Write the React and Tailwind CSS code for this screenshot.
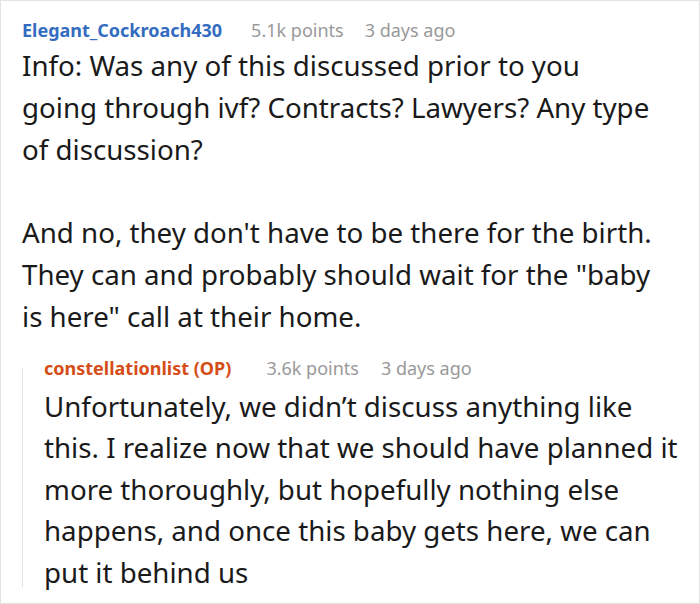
const Meta = ({ name, nameColor, points, age, gapA, gapB }) => (
  <div className="flex items-baseline whitespace-nowrap text-[18px] leading-[24px]">
    <span className={`font-bold ${nameColor}`}>{name}</span>
    <span className={`${gapA} text-[#999999]`}>{points}</span>
    <span className={`${gapB} text-[#999999]`}>{age}</span>
  </div>
);

const App = () => {
  return (
    <div
      className="w-[700px] h-[604px] overflow-hidden border border-[#e3e3e3] bg-white text-[#1a1a1a]"
      style={{ fontFamily: '"Noto Sans", "Open Sans", sans-serif' }}
    >
      <div className="pl-[21px] pt-[17px]">
        <Meta
          name="Elegant_Cockroach430"
          nameColor="text-[#336cc0]"
          points="5.1k points"
          age="3 days ago"
          gapA="ml-[29px]"
          gapB="ml-[21px]"
        />

        <div className="mt-[2px] whitespace-nowrap text-[27.7px] leading-[42px]">
          <p>
            Info: Was any of this discussed prior to you
            <br />
            going through ivf? Contracts? Lawyers? Any type
            <br />
            of discussion?
          </p>
          <p className="mt-[41px]">
            And no, they don't have to be there for the birth.
            <br />
            They can and probably should wait for the "baby
            <br />
            is here" call at their home.
          </p>
        </div>

        <div className="mt-[19px] flex">
          <div className="mt-[12px] mb-[6px] w-px shrink-0 bg-[#e3e3e3]" />
          <div className="pl-[21px]">
            <Meta
              name="constellationlist (OP)"
              nameColor="text-[#d54d17]"
              points="3.6k points"
              age="3 days ago"
              gapA="ml-[35px]"
              gapB="ml-[22px]"
            />
            <p className="mt-[5.5px] whitespace-nowrap text-[27.7px] leading-[41.5px]">
              Unfortunately, we didn’t discuss anything like
              <br />
              this. I realize now that we should have planned it
              <br />
              more thoroughly, but hopefully nothing else
              <br />
              happens, and once this baby gets here, we can
              <br />
              put it behind us
            </p>
          </div>
        </div>
      </div>
    </div>
  );
};

export default App;
